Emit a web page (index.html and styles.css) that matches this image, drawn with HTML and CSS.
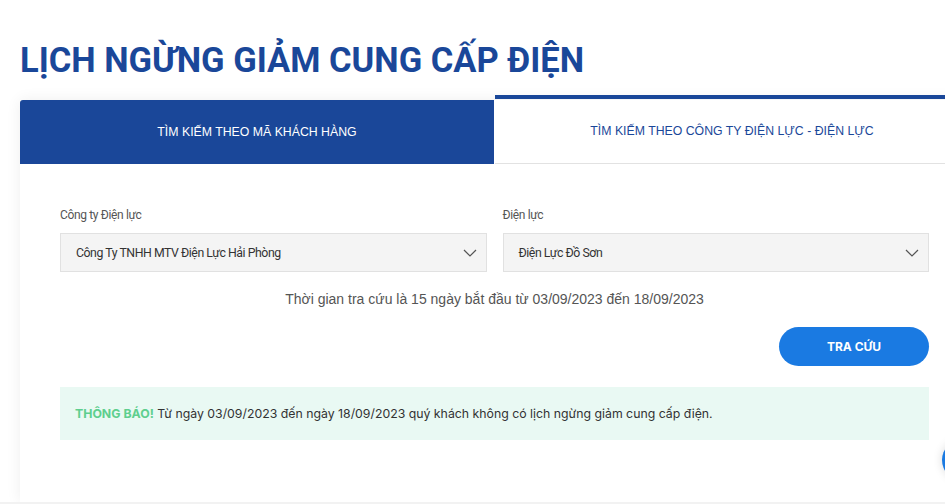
FILE: index.html
```html
<!DOCTYPE html>
<html lang="vi">
<head>
    <meta charset="UTF-8">
    <meta name="viewport" content="width=device-width, initial-scale=1.0">
    <title>Lịch ngừng giảm cung cấp điện</title>
    <link rel="stylesheet" href="styles.css">
</head>
<body>
    <h1 class="page-title">LỊCH NGỪNG GIẢM CUNG CẤP ĐIỆN</h1>

    <div class="card">
        <div class="tabs">
            <div class="tab active">TÌM KIẾM THEO MÃ KHÁCH HÀNG</div>
            <div class="tab">TÌM KIẾM THEO CÔNG TY ĐIỆN LỰC - ĐIỆN LỰC</div>
        </div>

        <div class="card-body">
            <div class="fields">
                <div class="field">
                    <label>Công ty Điện lực</label>
                    <div class="select">
                        <span>Công Ty TNHH MTV Điện Lực Hải Phòng</span>
                        <svg class="chevron" width="14" height="8" viewBox="0 0 14 8"><path d="M1 1l6 6 6-6" fill="none" stroke="#555" stroke-width="1.2"/></svg>
                    </div>
                </div>
                <div class="field">
                    <label>Điện lực</label>
                    <div class="select">
                        <span>Điện Lực Đồ Sơn</span>
                        <svg class="chevron" width="14" height="8" viewBox="0 0 14 8"><path d="M1 1l6 6 6-6" fill="none" stroke="#555" stroke-width="1.2"/></svg>
                    </div>
                </div>
            </div>

            <p class="range">Thời gian tra cứu là 15 ngày bắt đầu từ 03/09/2023 đến 18/09/2023</p>

            <div class="actions">
                <button class="btn-search">TRA CỨU</button>
            </div>

            <div class="notice"><b>THÔNG BÁO!</b> Từ ngày 03/09/2023 đến ngày 18/09/2023 quý khách không có lịch ngừng giảm cung cấp điện.</div>
        </div>
    </div>

    <div class="footer-strip"></div>
    <div class="chat-bubble"></div>
</body>
</html>
```

FILE: styles.css
```css
html, body { margin: 0; overflow: hidden; }
body { background: #fff; font-family: Roboto, "Liberation Sans", sans-serif; color: #333; width: 945px; height: 504px; position: relative; }

.page-title { margin: 39px 0 19px 20px; font-family: Roboto, "Liberation Sans", sans-serif; font-weight: 700; font-size: 34.5px; line-height: 42px; color: #1a4799; }

.card { margin-left: 20px; width: 949px; background: #fff; box-shadow: 0 0 14px rgba(0, 0, 0, 0.07); }

.tabs { display: flex; align-items: flex-end; }
.tab { flex: 1; display: flex; align-items: center; justify-content: center; height: 64px; box-sizing: border-box; font-family: "Liberation Sans", Arial, sans-serif; font-size: 12.3px; color: #1a4799; border-bottom: 1px solid #e2e2e2; }
.tab.active { background: #1a4799; color: #fff; border-radius: 3px 0 0 0; border-bottom-color: #1a4799; margin-right: 1px; }
.tab:not(.active) { height: 69px; margin-top: -5px; border-top: 4px solid #1a4799; }

.card-body { padding: 43px 40px 62px; }

.fields { display: grid; grid-template-columns: 1fr 1fr; gap: 16px; }
.field label { display: block; font-size: 12px; line-height: 16px; color: #555; margin-bottom: 10px; letter-spacing: -0.35px; }
.select { display: flex; align-items: center; justify-content: space-between; height: 39px; box-sizing: border-box; padding: 0 9px 0 15px; background: #f4f4f4; border: 1px solid #e1e1e1; font-size: 12.3px; color: #333; letter-spacing: -0.45px; }

.range { margin: 17px 0 0; text-align: center; font-family: "Liberation Sans", Arial, sans-serif; font-size: 14px; line-height: 20px; color: #555; }

.actions { display: flex; justify-content: flex-end; margin-top: 18px; }
.btn-search { width: 150px; height: 39px; border: none; border-radius: 20px; background: #1a7ae2; color: #fff; font-family: Inter, "Liberation Sans", sans-serif; font-weight: 700; font-size: 12px; cursor: pointer; }

.notice { margin-top: 21px; height: 53px; box-sizing: border-box; padding: 0 15px; display: flex; align-items: center; background: #e9f9f3; font-family: Inter, "Liberation Sans", sans-serif; font-size: 12.3px; color: #333; white-space: pre; }
.notice b { color: #5ecf8e; font-weight: 700; }

.footer-strip { height: 20px; background: #f2f2f2; }

.chat-bubble { position: absolute; right: -37px; top: 440px; width: 40px; height: 40px; border-radius: 50%; background: #1a7ae2; box-shadow: 0 0 10px rgba(0, 0, 0, 0.15); }
```
